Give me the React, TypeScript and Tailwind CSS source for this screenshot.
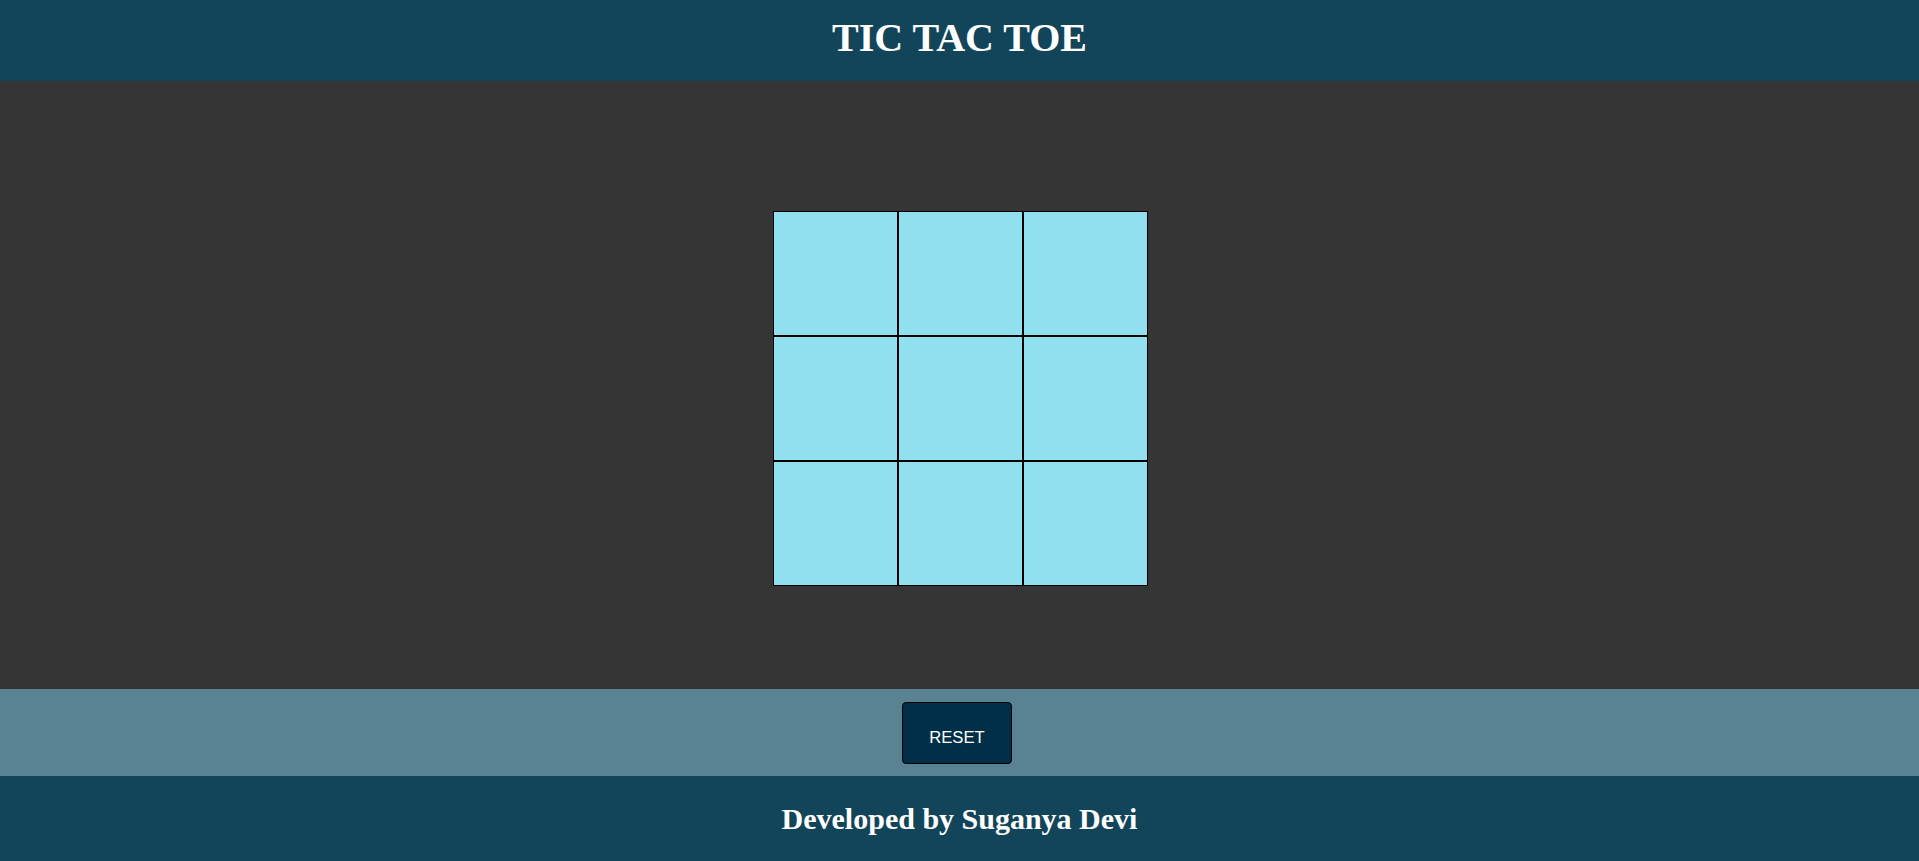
import { useState } from 'react';

type Mark = 'X' | 'O' | null;

export default function App() {
  const [cells, setCells] = useState<Mark[]>(Array(9).fill(null));
  const [turn, setTurn] = useState<'X' | 'O'>('X');

  function handleClick(i: number) {
    if (cells[i]) return;
    const next = [...cells];
    next[i] = turn;
    setCells(next);
    setTurn(turn === 'X' ? 'O' : 'X');
  }

  function reset() {
    setCells(Array(9).fill(null));
    setTurn('X');
  }

  return (
    <div className="flex min-h-screen w-full flex-col" style={{ fontFamily: '"Liberation Serif", "Times New Roman", serif' }}>
      {/* Header */}
      <header className="flex h-[81px] items-center justify-center bg-[#124559] pb-[6px]">
        <h1 className="text-[40px] font-bold leading-none text-white">TIC TAC TOE</h1>
      </header>

      {/* Board */}
      <main className="flex justify-center bg-[#353535] pt-[130px] pb-[103px] pl-[2px]">
        <div className="grid w-[375px] grid-cols-3">
          {cells.map((c, i) => (
            <button
              key={i}
              onClick={() => handleClick(i)}
              className="flex h-[125px] w-[125px] items-center justify-center border border-black bg-[#90e0ef] text-[56px] font-bold text-[#01161e]"
            >
              {c}
            </button>
          ))}
        </div>
      </main>

      {/* Controls */}
      <div className="flex h-[87px] items-center justify-center bg-[#598392]">
        <button
          onClick={reset}
          className="mr-[5px] h-[62px] w-[110px] rounded-[4px] border border-black bg-[#012f47] pt-[9px] text-[16.67px] text-white"
          style={{ fontFamily: '"Liberation Sans", Arial, sans-serif' }}
        >
          RESET
        </button>
      </div>

      {/* Footer */}
      <footer className="flex h-[85px] items-center justify-center bg-[#124559]">
        <h2 className="text-[30px] font-bold leading-none text-white">Developed by Suganya Devi</h2>
      </footer>
    </div>
  );
}
